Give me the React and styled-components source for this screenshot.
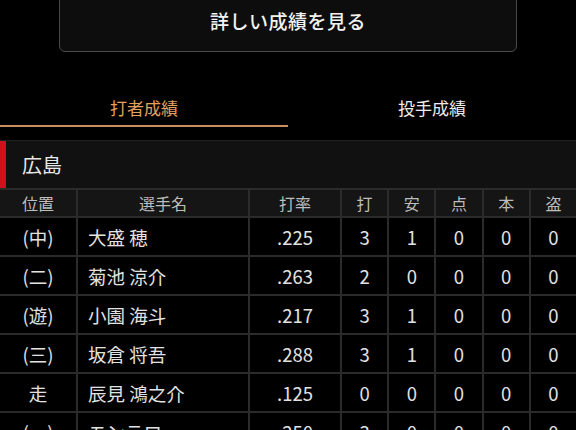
import React from "react";
import styled, { createGlobalStyle } from "styled-components";

const Global = createGlobalStyle`
  *, *::before, *::after { box-sizing: border-box; }
  html, body { margin: 0; padding: 0; background: #000; }
  body { font-family: "Noto Sans CJK JP", "Noto Sans", sans-serif; color: #e6e6e6; overflow: hidden; }
`;

const Page = styled.div`
  width: 576px;
  height: 430px;
  overflow: hidden;
  background: #000;
`;

const ButtonWrap = styled.div`
  padding: 0 59px;
`;

const MoreButton = styled.div`
  margin-top: -12px;
  height: 64px;
  border: 1px solid #4a4a4a;
  border-radius: 6px;
  background: #0d0d0d;
  display: flex;
  align-items: center;
  justify-content: center;
  font-size: 19px;
  font-weight: 500;
  color: #f2f2f2;
  letter-spacing: 0.5px;
`;

const Tabs = styled.div`
  margin-top: 36px;
  display: grid;
  grid-template-columns: 1fr 1fr;
`;

const Tab = styled.div`
  height: 39px;
  display: flex;
  align-items: center;
  justify-content: center;
  padding-top: 1px;
  font-size: 17px;
  color: ${(p) => (p.$active ? "#e3a262" : "#ececec")};
  border-bottom: 2px solid ${(p) => (p.$active ? "#c98d5e" : "transparent")};
`;

const TeamHeader = styled.div`
  margin-top: 13px;
  height: 48px;
  border-top: 1px solid #1f1f1f;
  background: #111;
  display: flex;
  align-items: stretch;
`;

const TeamMark = styled.div`
  width: 6px;
  background: #d0101e;
`;

const TeamName = styled.div`
  display: flex;
  align-items: center;
  padding-left: 16px;
  font-size: 20px;
  color: #e8e8e8;
`;

const Table = styled.div`
  background: #2b2b2b;
  display: grid;
  row-gap: 2px;
  padding-top: 2px;
`;

const Row = styled.div`
  display: grid;
  grid-template-columns: 76px 170px 90px repeat(5, 1fr);
  column-gap: 2px;
  height: ${(p) => (p.$head ? "26px" : "37px")};
`;

const Cell = styled.div`
  background: ${(p) => (p.$head ? "#151515" : "#000")};
  color: ${(p) => (p.$head ? "#bdbdbd" : "#e2e2e2")};
  font-size: ${(p) => (p.$head ? "16px" : "18.5px")};
  display: flex;
  align-items: center;
  justify-content: ${(p) => (p.$left ? "flex-start" : "center")};
  padding-left: ${(p) => (p.$left ? "10px" : "0")};
  white-space: nowrap;
  overflow: hidden;
`;

const headers = ["位置", "選手名", "打率", "打", "安", "点", "本", "盗"];

const rows = [
  ["(中)", "大盛 穂", ".225", "3", "1", "0", "0", "0"],
  ["(二)", "菊池 涼介", ".263", "2", "0", "0", "0", "0"],
  ["(遊)", "小園 海斗", ".217", "3", "1", "0", "0", "0"],
  ["(三)", "坂倉 将吾", ".288", "3", "1", "0", "0", "0"],
  ["走", "辰見 鴻之介", ".125", "0", "0", "0", "0", "0"],
  ["(一)", "モンテロ", ".250", "3", "0", "0", "0", "0"],
];

export default function App() {
  return (
    <Page>
      <Global />
      <ButtonWrap>
        <MoreButton>詳しい成績を見る</MoreButton>
      </ButtonWrap>
      <Tabs>
        <Tab $active>打者成績</Tab>
        <Tab>投手成績</Tab>
      </Tabs>
      <TeamHeader>
        <TeamMark />
        <TeamName>広島</TeamName>
      </TeamHeader>
      <Table>
        <Row $head>
          {headers.map((h) => (
            <Cell $head key={h}>{h}</Cell>
          ))}
        </Row>
        {rows.map((r, i) => (
          <Row key={i}>
            {r.map((c, j) => (
              <Cell key={j} $left={j === 1}>{c}</Cell>
            ))}
          </Row>
        ))}
      </Table>
    </Page>
  );
}
